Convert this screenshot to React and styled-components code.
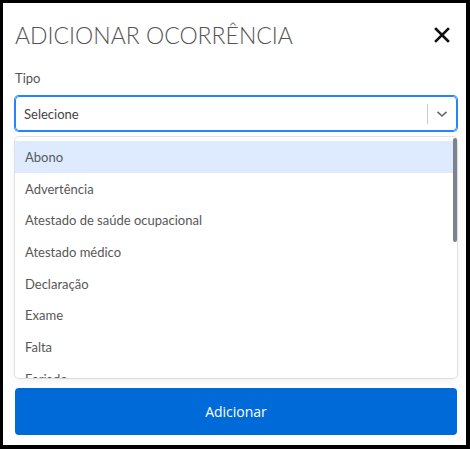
import React from "react";
import styled, { createGlobalStyle } from "styled-components";

const Global = createGlobalStyle`
  html, body { margin: 0; padding: 0; background: #000; }
  body { font-family: "Lato", "Open Sans", sans-serif; }
  * { box-sizing: border-box; }
`;

const Modal = styled.div`
  margin: 3px 4px 4px 3px;
  height: 442px;
  background: #fff;
  padding: 16px 9px 10px 12px;
  display: flex;
  flex-direction: column;
`;

const Header = styled.div`
  display: flex;
  align-items: center;
  justify-content: space-between;
  height: 31px;
`;

const Title = styled.h1`
  margin: 0;
  font-family: "Lato", sans-serif;
  font-weight: 300;
  font-size: 23px;
  color: #555;
  letter-spacing: 0;
`;

const Close = styled.button`
  border: 0;
  background: none;
  padding: 0;
  margin-right: 6px;
  width: 18px;
  height: 18px;
  display: flex;
  align-items: center;
  justify-content: center;
  cursor: pointer;
`;

const Label = styled.label`
  display: block;
  margin-top: 20px;
  font-size: 13px;
  line-height: 16px;
  color: #555;
`;

const Control = styled.div`
  margin-top: 10px;
  height: 35px;
  border: 1px solid #2684ff;
  box-shadow: 0 0 0 1px #2684ff;
  border-radius: 4px;
  display: flex;
  align-items: center;
`;

const Value = styled.div`
  flex: 1;
  padding-left: 8px;
  font-size: 13px;
  color: #444;
`;

const Separator = styled.span`
  width: 1px;
  height: 20px;
  background: #ccc;
`;

const Indicator = styled.div`
  width: 28px;
  display: flex;
  align-items: center;
  justify-content: center;
  color: #666;
`;

const Menu = styled.div`
  position: relative;
  margin-top: 6px;
  border-radius: 4px;
  box-shadow: 0 0 0 1px rgba(0, 0, 0, 0.1), 0 4px 11px rgba(0, 0, 0, 0.06);
  background: #fff;
`;

const MenuList = styled.div`
  height: 241px;
  overflow-y: auto;
  padding: 4px 0;
  scrollbar-width: none;
  &::-webkit-scrollbar { display: none; }
`;

const Thumb = styled.div`
  position: absolute;
  top: 1px;
  right: 0;
  width: 4px;
  height: 104px;
  border-radius: 2px;
  background: #7b8291;
`;

const Option = styled.div`
  height: 31.7px;
  display: flex;
  align-items: center;
  padding-left: 10px;
  font-size: 13px;
  color: #585858;
  background: ${(p) => (p.$focused ? "#deebff" : "transparent")};
`;

const Button = styled.button`
  margin-top: 10px;
  height: 47px;
  border: 0;
  border-radius: 4px;
  background: #006ad8;
  color: #fff;
  font-family: "Open Sans", sans-serif;
  font-size: 14px;
  cursor: pointer;
`;

const options = [
  "Abono",
  "Advertência",
  "Atestado de saúde ocupacional",
  "Atestado médico",
  "Declaração",
  "Exame",
  "Falta",
  "Feriado",
  "Folga",
  "Férias",
  "Licença maternidade",
  "Licença paternidade",
  "Licença médica",
  "Outros",
  "Suspensão",
  "Treinamento",
  "Viagem",
];

export default function App() {
  return (
    <>
      <Global />
      <Modal>
        <Header>
          <Title>ADICIONAR OCORRÊNCIA</Title>
          <Close aria-label="Fechar">
            <svg width="16" height="16" viewBox="0 0 16 16">
              <path d="M2 2 L14 14 M14 2 L2 14" stroke="#111" strokeWidth="2.6" strokeLinecap="square" />
            </svg>
          </Close>
        </Header>
        <Label>Tipo</Label>
        <Control>
          <Value>Selecione</Value>
          <Separator />
          <Indicator>
            <svg width="12" height="8" viewBox="0 0 12 8">
              <path d="M1.5 1.8 L6 6 L10.5 1.8" fill="none" stroke="#666" strokeWidth="1.6" />
            </svg>
          </Indicator>
        </Control>
        <Menu>
          <MenuList>
            {options.map((o, i) => (
              <Option key={o} $focused={i === 0}>{o}</Option>
            ))}
          </MenuList>
          <Thumb />
        </Menu>
        <Button>Adicionar</Button>
      </Modal>
    </>
  );
}
